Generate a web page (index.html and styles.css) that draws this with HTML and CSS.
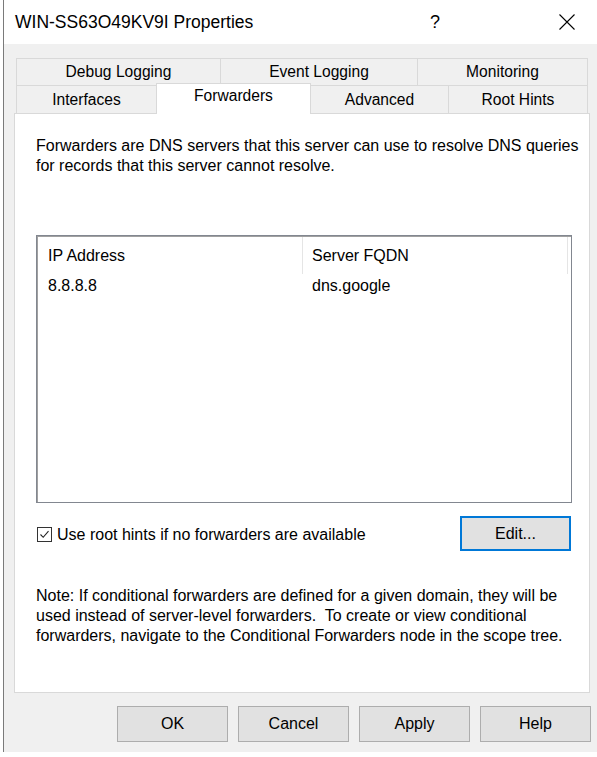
FILE: index.html
```html
<!DOCTYPE html>
<html>
<head>
<meta charset="utf-8">
<link rel="stylesheet" href="styles.css">
</head>
<body>
<div class="window">
  <div class="titlebar">
    <div class="title">WIN-SS63O49KV9I Properties</div>
    <div class="help">?</div>
    <div class="close">
      <svg width="16" height="16" viewBox="0 0 16 16"><path d="M0.5 0.5 L15.5 15.5 M15.5 0.5 L0.5 15.5" stroke="#000" stroke-width="1.1" fill="none"/></svg>
    </div>
  </div>
  <div class="client">
    <div class="tabs">
      <div class="tabrow back">
        <div class="tab t-debug">Debug Logging</div>
        <div class="tab t-event">Event Logging</div>
        <div class="tab t-mon">Monitoring</div>
      </div>
      <div class="tabrow front">
        <div class="tab t-if">Interfaces</div>
        <div class="tab t-fw selected">Forwarders</div>
        <div class="tab t-adv">Advanced</div>
        <div class="tab t-root">Root Hints</div>
      </div>
    </div>
    <div class="panel">
      <p class="intro">Forwarders are DNS servers that this server can use to resolve DNS queries for records that this server cannot resolve.</p>
      <div class="listbox">
        <div class="lhead">
          <div class="col c1">IP Address</div>
          <div class="col c2">Server FQDN</div>
          <div class="col c3"></div>
        </div>
        <div class="lrow">
          <div class="col c1">8.8.8.8</div>
          <div class="col c2">dns.google</div>
        </div>
      </div>
      <div class="optrow">
        <label class="check">
          <span class="box"><svg width="13" height="13" viewBox="0 0 13 13"><path d="M2.5 6.5 L5.2 9.3 L10.5 3.2" stroke="#222" stroke-width="1.1" fill="none"/></svg></span>
          <span>Use root hints if no forwarders are available</span>
        </label>
        <div class="btn edit">Edit...</div>
      </div>
      <p class="note">Note: If conditional forwarders are defined for a given domain, they will be used instead of server-level forwarders.&nbsp; To create or view conditional forwarders, navigate to the Conditional Forwarders node in the scope tree.</p>
    </div>
    <div class="buttons">
      <div class="btn">OK</div>
      <div class="btn">Cancel</div>
      <div class="btn">Apply</div>
      <div class="btn">Help</div>
    </div>
  </div>
</div>
</body>
</html>
```

FILE: styles.css
```css
html, body {
  margin: 0;
  padding: 0;
  background: #ffffff;
}
body {
  font-family: "Liberation Sans", Arial, sans-serif;
  font-size: 16px;
  color: #000;
  width: 597px;
  height: 757px;
  overflow: hidden;
}
.window {
  margin-left: 3px;
  border-left: 1px solid #7a7a7a;
  height: 752px;
  background: #f0f0f0;
  display: flex;
  flex-direction: column;
}
.titlebar {
  height: 44px;
  background: #ffffff;
  display: flex;
  align-items: center;
  position: relative;
}
.title {
  margin-left: 11px;
  font-size: 17.5px;
}
.help {
  margin-left: auto;
  font-size: 18px;
  margin-right: 119px;
}
.close {
  width: 16px;
  height: 16px;
  margin-right: 22px;
  display: flex;
}
.client {
  flex: 1;
  display: flex;
  flex-direction: column;
}
.tabs {
  margin-top: 14px;
  margin-left: 12px;
  width: 571px;
  position: relative;
  z-index: 2;
  font-size: 15.6px;
}
.tabrow {
  display: flex;
}
.tab {
  box-sizing: border-box;
  display: flex;
  align-items: center;
  justify-content: center;
  background: #f0f0f0;
  border: 1px solid #d9d9d9;
  border-bottom: none;
  margin-right: -1px;
}
.back .tab { height: 27px; }
.front .tab { height: 28px; }
.t-debug { width: 205px; }
.t-event { width: 198px; }
.t-mon { width: 171px; }
.t-if { width: 141px; }
.t-fw { width: 155px; }
.t-adv { width: 139px; }
.t-root { width: 140px; }
.tab.selected {
  background: #ffffff;
  height: 31px;
  margin-top: -2px;
  margin-bottom: -1px;
  position: relative;
  z-index: 3;
  align-items: flex-start;
  padding-top: 3px;
}
.panel {
  margin-left: 10px;
  width: 576px;
  height: 580px;
  box-sizing: border-box;
  background: #ffffff;
  border: 1px solid #d9d9d9;
  padding: 22px 19px 0 21px;
  display: flex;
  flex-direction: column;
  position: relative;
  z-index: 1;
}
p {
  margin: 0;
  line-height: 20px;
}
.intro {
  width: 552px;
}
.listbox {
  margin-top: 59px;
  width: 536px;
  height: 268px;
  box-sizing: border-box;
  border: 1px solid #828790;
  box-shadow: inset 1px 1px 0 #a0a0a0;
}
.lhead, .lrow {
  display: flex;
}
.lhead {
  height: 37px;
  margin-top: 1px;
}
.lhead .col {
  border-right: 1px solid #e5e5e5;
}
.col {
  box-sizing: border-box;
  display: flex;
  align-items: center;
}
.c1 { width: 266px; padding-left: 11px; }
.c2 { width: 265px; padding-left: 9px; }
.c3 { width: 1px; border: none !important; }
.lrow {
  height: 24px;
  align-items: center;
}
.optrow {
  margin-top: 13px;
  display: flex;
  align-items: center;
  width: 535px;
  justify-content: space-between;
}
.check {
  display: flex;
  align-items: center;
  margin-top: 2px;
}
.box {
  width: 13px;
  height: 13px;
  border: 1px solid #333;
  margin-left: 1px;
  margin-right: 5px;
  display: flex;
}
.btn {
  box-sizing: border-box;
  width: 111px;
  height: 36px;
  background: #e1e1e1;
  border: 1px solid #adadad;
  display: flex;
  align-items: center;
  justify-content: center;
}
.btn.edit {
  width: 111px;
  height: 35px;
  border: 2px solid #0078d7;
  background: #e1e1e1;
}
.note {
  margin-top: 35px;
  width: 545px;
}
.buttons {
  margin-top: 13px;
  display: flex;
  justify-content: flex-end;
  gap: 10px;
  padding-right: 6px;
}
```
